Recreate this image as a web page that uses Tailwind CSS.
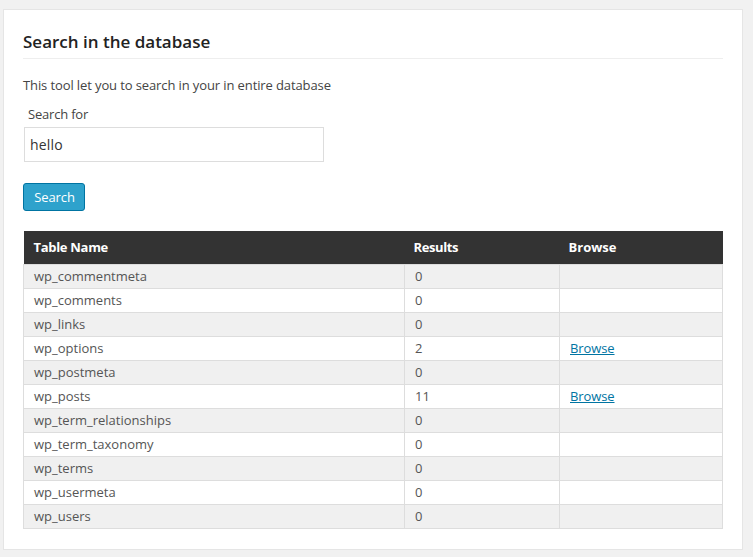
<!DOCTYPE html>
<html lang="en">
<head>
    <meta charset="UTF-8">
    <title>Search in the database</title>
    <script src="https://cdn.jsdelivr.net/npm/@tailwindcss/browser@4"></script>
</head>
<body class="bg-[#f1f1f1] h-[557px] overflow-hidden font-['Open_Sans',sans-serif] text-[13px] text-[#444]">
    <div class="ml-[3px] mt-[9px] w-[740px] h-[541px] bg-white border border-[#e5e5e5] px-[19px] pt-[20px]">
        <h2 class="text-[17px] leading-[24px] font-semibold text-[#222] pb-[4px] border-b border-[#eee]">Search in the database</h2>
        <p class="mt-[16px] leading-[20px] tracking-[-0.11px]">This tool let you to search in your in entire database</p>
        <label class="block mt-[9px] ml-[5px] leading-[20px] tracking-[-0.2px]">Search for</label>
        <input class="block mt-[3px] ml-[1px] w-[300px] h-[35px] border border-[#ddd] px-[5px] text-[14px] tracking-[0.2px] text-[#333] outline-none" value="hello">
        <button class="block mt-[21px] w-[62px] h-[28px] pt-[2px] pl-[1px] bg-[#2ea2cc] border border-[#0074a2] rounded-[3px] text-white tracking-[-0.1px]">Search</button>
        <table class="mt-[20px] w-[700px] table-fixed border-collapse">
            <thead>
                <tr class="bg-[#333] text-white h-[33px]">
                    <th class="w-[381px] text-left font-bold pl-[10px] pr-[10px] tracking-[-0.3px]">Table Name</th>
                    <th class="w-[155px] text-left font-bold pl-[9px] pr-[10px] tracking-[-0.4px]">Results</th>
                    <th class="text-left font-bold pl-[9px] pr-[10px]">Browse</th>
                </tr>
            </thead>
            <tbody class="text-[#555]">
                <tr class="h-[24px] bg-[#f0f0f0]"><td class="border border-[#ddd] px-[10px] pt-[1px]">wp_commentmeta</td><td class="border border-[#ddd] px-[10px] pt-[1px]">0</td><td class="border border-[#ddd] px-[10px] pt-[1px]"></td></tr>
                <tr class="h-[24px] bg-white"><td class="border border-[#ddd] px-[10px] pt-[1px]">wp_comments</td><td class="border border-[#ddd] px-[10px] pt-[1px]">0</td><td class="border border-[#ddd] px-[10px] pt-[1px]"></td></tr>
                <tr class="h-[24px] bg-[#f0f0f0]"><td class="border border-[#ddd] px-[10px] pt-[1px]">wp_links</td><td class="border border-[#ddd] px-[10px] pt-[1px]">0</td><td class="border border-[#ddd] px-[10px] pt-[1px]"></td></tr>
                <tr class="h-[24px] bg-white"><td class="border border-[#ddd] px-[10px] pt-[1px]">wp_options</td><td class="border border-[#ddd] px-[10px] pt-[1px]">2</td><td class="border border-[#ddd] px-[10px] pt-[1px]"><a href="#" class="underline text-[#0074a2] tracking-[-0.1px]">Browse</a></td></tr>
                <tr class="h-[24px] bg-[#f0f0f0]"><td class="border border-[#ddd] px-[10px] pt-[1px]">wp_postmeta</td><td class="border border-[#ddd] px-[10px] pt-[1px]">0</td><td class="border border-[#ddd] px-[10px] pt-[1px]"></td></tr>
                <tr class="h-[24px] bg-white"><td class="border border-[#ddd] px-[10px] pt-[1px]">wp_posts</td><td class="border border-[#ddd] px-[10px] pt-[1px]">11</td><td class="border border-[#ddd] px-[10px] pt-[1px]"><a href="#" class="underline text-[#0074a2] tracking-[-0.1px]">Browse</a></td></tr>
                <tr class="h-[24px] bg-[#f0f0f0]"><td class="border border-[#ddd] px-[10px] pt-[1px]">wp_term_relationships</td><td class="border border-[#ddd] px-[10px] pt-[1px]">0</td><td class="border border-[#ddd] px-[10px] pt-[1px]"></td></tr>
                <tr class="h-[24px] bg-white"><td class="border border-[#ddd] px-[10px] pt-[1px]">wp_term_taxonomy</td><td class="border border-[#ddd] px-[10px] pt-[1px]">0</td><td class="border border-[#ddd] px-[10px] pt-[1px]"></td></tr>
                <tr class="h-[24px] bg-[#f0f0f0]"><td class="border border-[#ddd] px-[10px] pt-[1px]">wp_terms</td><td class="border border-[#ddd] px-[10px] pt-[1px]">0</td><td class="border border-[#ddd] px-[10px] pt-[1px]"></td></tr>
                <tr class="h-[24px] bg-white"><td class="border border-[#ddd] px-[10px] pt-[1px]">wp_usermeta</td><td class="border border-[#ddd] px-[10px] pt-[1px]">0</td><td class="border border-[#ddd] px-[10px] pt-[1px]"></td></tr>
                <tr class="h-[24px] bg-[#f0f0f0]"><td class="border border-[#ddd] px-[10px] pt-[1px]">wp_users</td><td class="border border-[#ddd] px-[10px] pt-[1px]">0</td><td class="border border-[#ddd] px-[10px] pt-[1px]"></td></tr>
            </tbody>
        </table>
    </div>
</body>
</html>
